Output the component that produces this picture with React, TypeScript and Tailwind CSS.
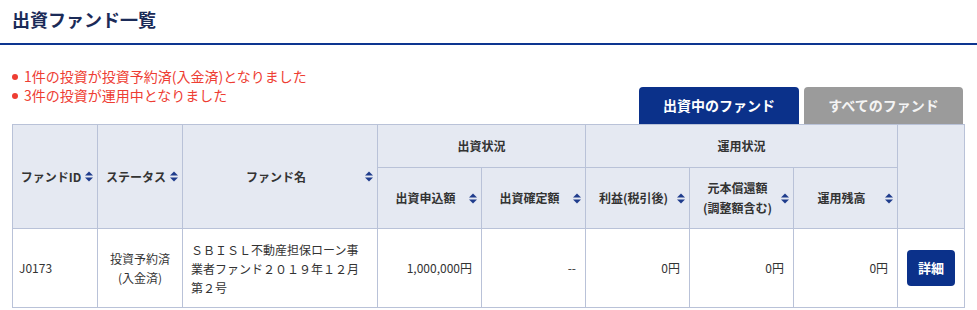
import React from "react"

const font = "font-['Noto_Sans_CJK_JP','Noto_Sans',sans-serif]"

function SortIcon() {
  return (
    <svg width="8" height="11" viewBox="0 0 8 11" className="shrink-0">
      <path d="M0 4.6 L4 0.4 L8 4.6 Z M0 6.4 L8 6.4 L4 10.6 Z" fill="#1f3c8c" />
    </svg>
  )
}

function SortTh({ label, rowSpan }: { label: React.ReactNode; rowSpan?: number }) {
  return (
    <th rowSpan={rowSpan} className="border border-[#b9c2d8] bg-[#e5e9f2] p-0 font-bold">
      <div className="flex items-center pl-1 pr-[4px]">
        <span className="flex-1 text-center leading-[20px]">{label}</span>
        <SortIcon />
      </div>
    </th>
  )
}

export default function App() {
  return (
    <div className={`${font} w-[977px] h-[310px] overflow-hidden bg-white text-[#333]`}>
      {/* Title */}
      <div className="h-[43px] px-3 flex items-center border-b-2 border-[#0d3590] box-content">
        <h1 className="text-[18px] font-bold text-[#1b2b58] leading-none -mt-[5px]">出資ファンド一覧</h1>
      </div>

      <div className="px-3">
        <div className="flex justify-between items-end w-[951px]">
          {/* Messages */}
          <ul className="pt-[22px] pb-[19px] text-[14px] leading-[19px] text-[#ee3d33]">
            <li className="flex items-center gap-[6px]">
              <span className="w-[6px] h-[6px] rounded-full bg-[#ee3d33]" />
              1件の投資が投資予約済(入金済)となりました
            </li>
            <li className="flex items-center gap-[6px]">
              <span className="w-[6px] h-[6px] rounded-full bg-[#ee3d33]" />
              3件の投資が運用中となりました
            </li>
          </ul>

          {/* Tabs */}
          <div className="flex gap-[5px]">
            <button className="w-[160px] h-[37px] rounded-t-[4px] bg-[#0b318a] text-white text-[14px] font-bold">
              出資中のファンド
            </button>
            <button className="w-[159px] h-[37px] rounded-t-[4px] bg-[#9b9b9b] text-[#f4f4f4] text-[14px] font-bold">
              すべてのファンド
            </button>
          </div>
        </div>

        {/* Table */}
        <table className="w-[952px] border-collapse table-fixed text-[12px]">
          <colgroup>
            <col className="w-[85px]" />
            <col className="w-[85px]" />
            <col className="w-[195px]" />
            <col className="w-[104px]" />
            <col className="w-[104px]" />
            <col className="w-[104px]" />
            <col className="w-[104px]" />
            <col className="w-[104px]" />
            <col className="w-[67px]" />
          </colgroup>
          <thead>
            <tr className="h-[43px]">
              <SortTh label="ファンドID" rowSpan={2} />
              <SortTh label="ステータス" rowSpan={2} />
              <SortTh label="ファンド名" rowSpan={2} />
              <th colSpan={2} className="border border-[#b9c2d8] bg-[#e5e9f2] font-bold">
                出資状況
              </th>
              <th colSpan={3} className="border border-[#b9c2d8] bg-[#e5e9f2] font-bold">
                運用状況
              </th>
              <th rowSpan={2} className="border border-[#b9c2d8] bg-[#e5e9f2]" />
            </tr>
            <tr className="h-[61px]">
              <SortTh label="出資申込額" />
              <SortTh label="出資確定額" />
              <SortTh label="利益(税引後)" />
              <SortTh
                label={
                  <>
                    元本償還額
                    <br />
                    (調整額含む)
                  </>
                }
              />
              <SortTh label="運用残高" />
            </tr>
          </thead>
          <tbody>
            <tr className="h-[79px]">
              <td className="border border-[#b9c2d8] px-[6px]">J0173</td>
              <td className="border border-[#b9c2d8] text-center leading-[19px]">
                投資予約済
                <br />
                (入金済)
              </td>
              <td className="border border-[#b9c2d8] pl-[8px] pr-[13px] leading-[19px]">
                ＳＢＩＳＬ不動産担保ローン事業者ファンド２０１９年１２月第２号
              </td>
              <td className="border border-[#b9c2d8] text-right pr-[9px]">1,000,000円</td>
              <td className="border border-[#b9c2d8] text-right pr-[9px]">--</td>
              <td className="border border-[#b9c2d8] text-right pr-[9px]">0円</td>
              <td className="border border-[#b9c2d8] text-right pr-[9px]">0円</td>
              <td className="border border-[#b9c2d8] text-right pr-[9px]">0円</td>
              <td className="border border-[#b9c2d8] text-center">
                <button className="w-[48px] h-[36px] rounded-[4px] bg-[#0b318a] text-white text-[13px] font-bold">
                  詳細
                </button>
              </td>
            </tr>
          </tbody>
        </table>
      </div>
    </div>
  )
}
